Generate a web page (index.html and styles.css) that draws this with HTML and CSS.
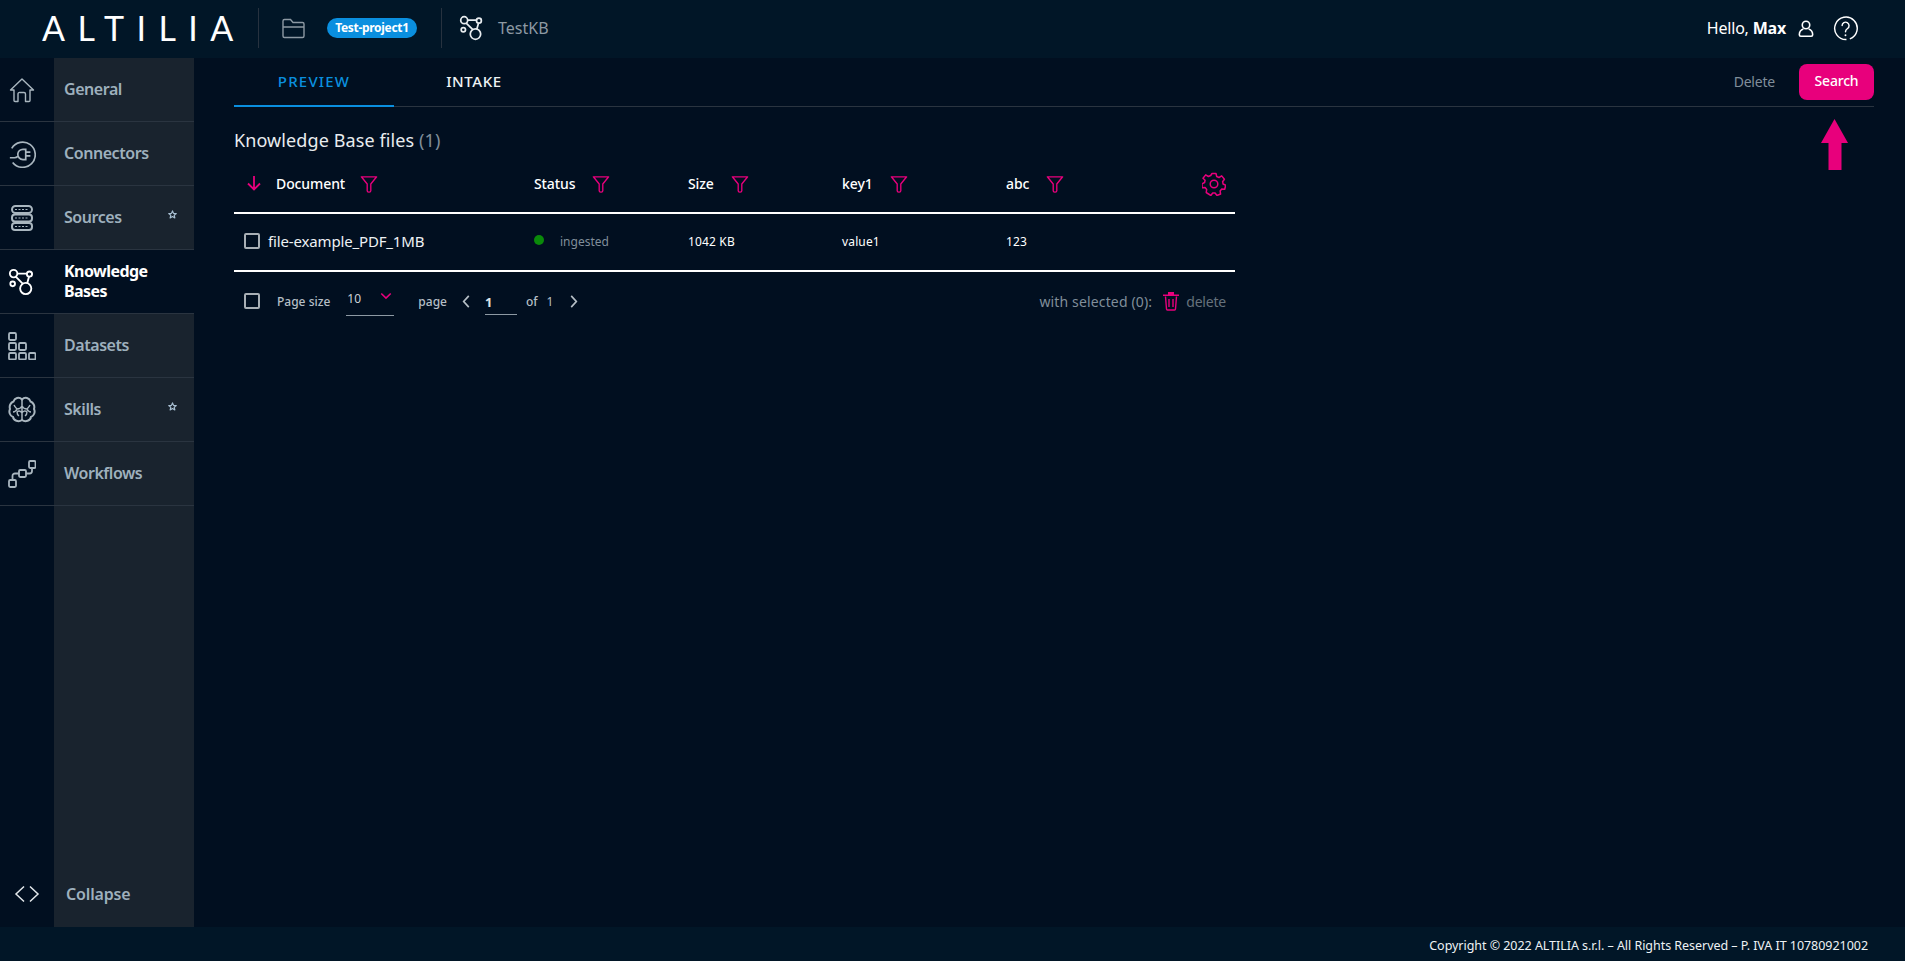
FILE: index.html
```html
<!DOCTYPE html>
<html lang="en">
<head>
<meta charset="utf-8">
<title>Altilia - TestKB</title>
<link rel="stylesheet" href="styles.css">
</head>
<body>
<svg class="defs" width="0" height="0" aria-hidden="true">
  <symbol id="kb" viewBox="0 0 30 30"><g fill="none" stroke="currentColor" stroke-width="2"><circle cx="6" cy="6" r="4"/><circle cx="23" cy="6.500" r="2.800"/><circle cx="5" cy="17" r="2.500"/><circle cx="19" cy="22" r="6"/><path d="M10 6h10M8 9l8 8M22.500 9.500l-2 7"/></g></symbol>
  <symbol id="filter" viewBox="0 0 20 20"><path d="M1.500 2h17l-6.500 8v7.500c0 1-1 1.500-1.800 1.500h-.5c-.8 0-1.700-.5-1.700-1.500V10z" fill="none" stroke="currentColor" stroke-width="1.500" stroke-linejoin="round"/></symbol>
  <symbol id="star" viewBox="0 0 12 12"><path d="M6 1.200 7.400 4.500l3.600.3-2.700 2.300.8 3.500L6 8.800l-3.100 1.800.8-3.500L1 4.800l3.600-.3z" fill="none" stroke="currentColor" stroke-width="1.600" stroke-linejoin="round"/></symbol>
</svg>
<header class="topbar">
  <div class="logo">ALTILIA</div>
  <span class="vsep"></span>
  <svg class="ic-folder" viewBox="0 0 24 22"><path d="M2 19V4a1.500 1.500 0 0 1 1.500-1.500h6l2.500 3h9.500A1.500 1.500 0 0 1 23 7v12a1.500 1.500 0 0 1-1.500 1.500h-18A1.500 1.500 0 0 1 2 19zM2 10h21" fill="none" stroke="currentColor" stroke-width="1.400"/></svg>
  <span class="pill">Test-project1</span>
  <span class="vsep second"></span>
  <svg class="ic-kb"><use href="#kb"/></svg>
  <span class="crumb">TestKB</span>
  <div class="user">
    <span>Hello, <b>Max</b></span>
    <svg class="ic-user" viewBox="0 0 18 20"><g fill="none" stroke="currentColor" stroke-width="1.800"><circle cx="9" cy="6" r="4.200"/><path d="M6 10.500C3 11.500 1.500 14 1.500 17c0 1 .7 1.700 1.700 1.700h11.600c1 0 1.700-.7 1.700-1.700 0-3-1.500-5.500-4.500-6.500"/></g></svg>
    <svg class="ic-help" viewBox="0 0 26 26"><g fill="none" stroke="currentColor" stroke-width="1.500"><path d="M14 24.500A11.700 11.700 0 1 1 17.500 23.800"/><path d="M9.500 10a3.600 3.600 0 1 1 5.600 3c-1.400 1-2.100 1.800-2.100 3.500" stroke-linecap="round"/></g><circle cx="13" cy="20" r="1" fill="currentColor"/></svg>
  </div>
</header>
<div class="body">
  <nav class="sidebar">
    <a class="nav-item">
      <span class="nav-ic"><svg class="sm" viewBox="0 0 26 26"><path d="M1.500 13 13 2l11.500 11h-3.500v10.500a1 1 0 0 1-1 1h-3.500V17a1.500 1.500 0 0 0-1.500-1.500h-4A1.500 1.500 0 0 0 9 17v7.500H6a1 1 0 0 1-1-1V13z" fill="none" stroke="currentColor" stroke-width="1.400" stroke-linejoin="round"/></svg></span>
      <span class="nav-label">General</span>
    </a>
    <a class="nav-item">
      <span class="nav-ic"><svg viewBox="0 0 30 30"><g fill="none" stroke="currentColor" stroke-width="1.800"><path d="M4 9A13.500 13.500 0 1 1 5 24"/><path d="M2 19h5c1.500 0 2.500-.5 3.500-1.500M10.500 15a5.500 5.500 0 0 1 5.500-5h3v11h-3a5.500 5.500 0 0 1-5.500-6zM19 13h5M19 17h5"/></g></svg></span>
      <span class="nav-label">Connectors</span>
    </a>
    <a class="nav-item">
      <span class="nav-ic"><svg viewBox="0 0 24 28"><g fill="none" stroke="currentColor" stroke-width="2"><rect x="2" y="2" width="20" height="7" rx="3.500"/><rect x="2" y="10.500" width="20" height="7" rx="3"/><rect x="2" y="19" width="20" height="7" rx="3"/><path d="M5 5.500h14M5 14h14M5 22.500h14" stroke-dasharray="2 1.500" stroke-width="1.200"/></g></svg></span>
      <span class="nav-label">Sources</span>
      <svg class="star"><use href="#star"/></svg>
    </a>
    <a class="nav-item active">
      <span class="nav-ic"><svg><use href="#kb"/></svg></span>
      <span class="nav-label">Knowledge Bases</span>
    </a>
    <a class="nav-item">
      <span class="nav-ic"><svg viewBox="0 0 28 28"><g fill="none" stroke="currentColor" stroke-width="1.800"><rect x="1" y="1" width="7" height="7" rx="1.200"/><rect x="1" y="11" width="7" height="7" rx="1.200"/><rect x="11" y="11" width="7" height="7" rx="1.200"/><rect x="1" y="21" width="7" height="6.500" rx="1.200"/><rect x="11" y="21" width="7" height="6.500" rx="1.200"/><rect x="21" y="21" width="6.500" height="6.500" rx="1.200"/></g></svg></span>
      <span class="nav-label">Datasets</span>
    </a>
    <a class="nav-item">
      <span class="nav-ic"><svg viewBox="0 0 28 28"><g fill="none" stroke="currentColor" stroke-width="2"><path d="M14 3.500C11 .5 6.500 2 5.500 5.500 2.500 6.500 1 10 2 13c-1.500 3 0 7 3 8 .5 3.500 5.500 5.500 9 3 3.500 2.500 8.500.5 9-3 3-1 4.500-5 3-8 1-3-.5-6.500-3.500-7.500C21.500 2 17 .5 14 3.500z"/><path d="M14 3.500v21M14 10c-1 2-3 3-5 3M6 9c1 2 2 3 3 4M9 13c-1 2-2 3-4 3M14 17c-1-2-3-2.500-5-1.500M9 15.500c0 2 .5 3.500 2 4.500M14 10c1 2 3 3 5 3M22 9c-1 2-2 3-3 4M19 13c1 2 2 3 4 3M14 17c1-2 3-2.500 5-1.500M19 15.500c0 2-.5 3.500-2 4.500" stroke-width="1.500"/></g></svg></span>
      <span class="nav-label">Skills</span>
      <svg class="star"><use href="#star"/></svg>
    </a>
    <a class="nav-item">
      <span class="nav-ic"><svg viewBox="0 0 28 28"><g fill="none" stroke="currentColor" stroke-width="1.800"><rect x="1" y="20" width="7" height="7" rx="1.200"/><rect x="11" y="10" width="7" height="7" rx="1.200"/><rect x="21" y="1" width="6.500" height="7" rx="1.200"/><path d="M4.500 20v-4a2.500 2.500 0 0 1 2.500-2.500h4M18 13.500h3.500a2.500 2.500 0 0 0 2.500-2.500V8"/></g></svg></span>
      <span class="nav-label">Workflows</span>
    </a>
    <span class="nav-fill"><span class="fill-ic"></span><span class="fill-label"></span></span>
    <a class="nav-item collapse">
      <span class="nav-ic"><svg viewBox="0 0 26 18"><path d="M10 1.500 2 9l8 7.500M16 1.500 24 9l-8 7.500" fill="none" stroke="currentColor" stroke-width="1.500"/></svg></span>
      <span class="nav-label">Collapse</span>
    </a>
  </nav>
  <main class="main">
    <div class="tabs">
      <span class="tab current">PREVIEW</span>
      <span class="tab">INTAKE</span>
      <span class="tabs-actions">
        <span class="link-delete">Delete</span>
        <span class="btn-search">Search</span>
      </span>
    </div>
    <svg class="arrow" viewBox="0 0 27 51"><path d="M13.500 0 27 24h-6.500v27h-13V24H0z" fill="currentColor"/></svg>
    <h1 class="title">Knowledge Base files <span>(1)</span></h1>
    <div class="table">
      <div class="row head">
        <div class="cell first"><svg class="sort" viewBox="0 0 16 16"><path d="M8 1v13M2 8.500 8 14.500l6-6" fill="none" stroke="currentColor" stroke-width="1.800"/></svg><span>Document</span><svg class="filter"><use href="#filter"/></svg></div>
        <div class="cell"><span>Status</span><svg class="filter"><use href="#filter"/></svg></div>
        <div class="cell"><span>Size</span><svg class="filter"><use href="#filter"/></svg></div>
        <div class="cell"><span>key1</span><svg class="filter"><use href="#filter"/></svg></div>
        <div class="cell"><span>abc</span><svg class="filter"><use href="#filter"/></svg>
          <svg class="gear" viewBox="0 0 24 24"><g fill="none" stroke="currentColor" stroke-width="1.500"><circle cx="12" cy="12" r="3.800"/><path d="M10 1.500h4l.7 3 2.300 1 2.700-1.600 2.700 3.300-1.800 2.500.5 2.300 2.600 1.300-1 3.900-3-.1-1.600 1.900.5 3-3.600 1.500-1.900-2.500h-2.400l-1.900 2.500L4.200 20.500l.5-3-1.600-1.900-3 .1-.1-3.900 2.600-1.300.5-2.300L1 6.200l2.700-3.300 2.700 1.600 2.300-1z" stroke-linejoin="round"/></g></svg>
        </div>
      </div>
      <div class="row data">
        <div class="cell first-data"><span class="check"></span><span class="name">file-example_PDF_1MB</span></div>
        <div class="cell"><span class="dot"></span><span class="status">ingested</span></div>
        <div class="cell small">1042 KB</div>
        <div class="cell small">value1</div>
        <div class="cell small">123</div>
      </div>
    </div>
    <div class="pager">
      <span class="check"></span>
      <span class="pg-label size-label">Page size</span>
      <span class="select"><span>10</span><svg viewBox="0 0 14 8"><path d="M1.500 1 7 6.500 12.500 1" fill="none" stroke="currentColor" stroke-width="1.800"/></svg></span>
      <span class="pg-label page-label">page</span>
      <svg class="chev" viewBox="0 0 8 14"><path d="M7 1 1.500 7 7 13" fill="none" stroke="currentColor" stroke-width="1.800"/></svg>
      <span class="page-input">1</span>
      <span class="pg-label of">of</span>
      <span class="pg-label total">1</span>
      <svg class="chev next" viewBox="0 0 8 14"><path d="M1 1l5.500 6L1 13" fill="none" stroke="currentColor" stroke-width="1.800"/></svg>
      <span class="bulk">
        <span>with selected (0):</span>
        <svg class="trash" viewBox="0 0 16 20"><g fill="none" stroke="currentColor" stroke-width="1.400"><path d="M2.500 5.500 3.500 18a1 1 0 0 0 1 1h7a1 1 0 0 0 1-1l1-12.500M6 8v8M10 8v8"/></g><path d="M0 3.500h16v1.500H0zM5 1h6v2.500H5z" fill="currentColor"/></svg>
        <span class="muted">delete</span>
      </span>
    </div>
  </main>
</div>
<footer class="footer">Copyright © 2022 ALTILIA s.r.l. – All Rights Reserved – P. IVA IT 10780921002</footer>
</body>
</html>
```
FILE: styles.css
```css
* { box-sizing: border-box; }
html, body { height: 100%; }
body {
  margin: 0;
  height: 961px;
  overflow: hidden;
  display: flex;
  flex-direction: column;
  background: #010f20;
  color: #fff;
  font-family: "Noto Sans", "Open Sans", sans-serif;
}
.defs { position: absolute; }

.topbar {
  height: 58px;
  flex: none;
  display: flex;
  align-items: center;
  padding-bottom: 2px;
  background: #011627;
}
.logo {
  width: 258px;
  padding-left: 42px;
  font-family: "Lato", sans-serif;
  font-weight: 400;
  font-size: 34px;
  letter-spacing: 12.4px;
  line-height: 1;
  color: #fff;
  white-space: nowrap;
}
.vsep { width: 1px; height: 40px; background: #27323f; }
.ic-folder { width: 24px; height: 22px; margin-left: 22px; color: #8d99a3; }
.pill {
  margin-left: 22px;
  width: 90px;
  height: 20px;
  border-radius: 10px;
  background: #0a8fdf;
  font-size: 12px;
  font-weight: 700;
  line-height: 19px;
  text-align: center;
  letter-spacing: -0.3px;
}
.vsep.second { margin-left: 24px; }
.ic-kb { width: 26px; height: 28px; margin-left: 17px; color: #e8ecef; }
.crumb { margin-left: 13px; font-size: 16px; color: #8d99a3; }
.user { margin-left: auto; display: flex; align-items: center; padding-right: 47px; font-size: 16px; letter-spacing: -0.2px; }
.user b { font-weight: 700; }
.ic-user { width: 16px; height: 19px; margin-left: 12px; }
.ic-help { width: 25px; height: 25px; margin-left: 19px; }

.body { flex: 1; display: flex; min-height: 0; }
.sidebar { width: 194px; flex: none; display: flex; flex-direction: column; }
.nav-item {
  height: 64px;
  flex: none;
  display: flex;
  position: relative;
  border-bottom: 1px solid #2a3440;
  background: linear-gradient(to right, #010f20 54px, #19232e 54px);
}
.nav-ic { width: 54px; flex: none; display: flex; align-items: center; justify-content: center; padding-right: 10px; color: #a9b6bf; }
.nav-ic svg { width: 28px; height: 28px; }
.nav-ic svg.sm { width: 26px; height: 26px; }
.nav-label {
  padding-left: 10px;
  padding-bottom: 1px;
  align-self: center;
  font-size: 16px;
  font-weight: 600;
  line-height: 20px;
  letter-spacing: -0.45px;
  color: #9eb0bd;
}
.nav-item.active { background: #010f20; }
.nav-item.active .nav-ic { color: #fff; }
.nav-item.active .nav-label { color: #fff; font-weight: 700; width: 110px; letter-spacing: -0.55px; }
.star { position: absolute; top: 24px; left: 168px; width: 9px; height: 9px; color: #a9c0d3; }
.nav-fill { flex: 1; display: flex; }
.fill-ic { width: 54px; }
.fill-label { flex: 1; background: #19232e; }
.nav-item.collapse { height: 66px; border-bottom: 0; }
.collapse .nav-ic { padding-right: 0; color: #e4e9ec; }
.collapse .nav-ic svg { width: 26px; height: 18px; }
.collapse .nav-label { padding-left: 12px; letter-spacing: -0.15px; }

.main { flex: 1; position: relative; padding: 0 31px 0 40px; min-width: 0; }
.tabs { height: 49px; display: flex; border-bottom: 1px solid #2a3440; }
.tab {
  width: 160px;
  height: 49px;
  display: flex;
  align-items: center;
  justify-content: center;
  padding-bottom: 4px;
  font-size: 15px;
  font-weight: 500;
  letter-spacing: 0.6px;
  color: #eef2f4;
}
.tab.current { color: #0a8fdf; border-bottom: 2px solid #0a8fdf; padding-bottom: 2px; letter-spacing: 1.2px; }
.tabs-actions { margin-left: auto; display: flex; align-items: flex-start; padding-top: 6px; }
.link-delete { margin-top: 8px; margin-right: 24px; font-size: 14px; letter-spacing: -0.2px; color: #808e9a; }
.btn-search {
  width: 75px;
  height: 36px;
  border-radius: 8px;
  background: #e8007c;
  font-size: 14px;
  font-weight: 500;
  line-height: 34px;
  text-align: center;
  letter-spacing: -0.2px;
}
.arrow { position: absolute; left: 1627px; top: 61px; width: 27px; height: 51px; color: #e8007c; }
.title { margin: 19px 0 0; height: 28px; font-size: 18px; font-weight: 400; line-height: 28px; letter-spacing: 0.1px; color: #e8ecef; }
.title span { color: #808e9a; }

.table { width: 1001px; }
.row { display: grid; grid-template-columns: 300px 154px 154px 164px 1fr; }
.row.head { height: 60px; border-bottom: 2px solid #fff; }
.row.data { height: 58px; border-bottom: 2px solid #fff; }
.cell { display: flex; align-items: center; font-size: 14px; min-width: 0; position: relative; }
.row.head .cell { padding-top: 1px; font-weight: 500; letter-spacing: -0.1px; }
.row.data .cell { padding-bottom: 2px; }
.cell.first { padding-left: 12px; }
.sort { width: 16px; height: 16px; color: #e8007c; margin-right: 14px; margin-bottom: 2px; }
.filter { width: 18px; height: 18px; margin-left: 17px; color: #e8007c; }
.cell.first .filter { margin-left: 15px; }
.gear { width: 24px; height: 24px; color: #e8007c; position: absolute; left: 196px; top: 18px; }
.check { width: 16px; height: 16px; flex: none; border: 2px solid #a8afb5; border-radius: 2px; }
.first-data { padding-left: 10px; }
.name { margin-left: 8px; font-size: 15px; letter-spacing: -0.15px; color: #eef2f4; }
.dot { width: 10px; height: 10px; border-radius: 50%; background: #0a8a0a; margin-bottom: 2px; }
.status { margin-left: 16px; font-size: 12px; color: #808e9a; }
.cell.small { font-size: 12px; letter-spacing: 0.15px; }

.pager { width: 1001px; height: 58px; display: flex; align-items: center; padding-left: 10px; font-size: 13px; }
.pg-label { font-size: 12px; font-weight: 500; color: #b6bfc6; }
.size-label { margin-left: 17px; }
.select {
  width: 48px;
  height: 30px;
  margin-left: 16px;
  padding-left: 1px;
  border-bottom: 1px solid #8d99a3;
  display: flex;
  justify-content: space-between;
  font-size: 12px;
  line-height: 26px;
  color: #cdd3d8;
}
.select svg { width: 12px; height: 8px; margin: 6px 2px 0 0; color: #e8007c; }
.page-label { margin-left: 24px; }
.chev { width: 8px; height: 13px; color: #b6bfc6; margin-left: 15px; }
.chev.next { margin-left: 17px; }
.page-input {
  width: 32px;
  height: 28px;
  margin-left: 15px;
  border-bottom: 1px solid #8d99a3;
  font-size: 13px;
  font-weight: 700;
  line-height: 30px;
  color: #dfe4e7;
}
.of { margin-left: 9px; }
.total { margin-left: 9px; font-weight: 400; }
.bulk { margin-left: auto; padding-right: 9px; display: flex; align-items: center; font-size: 14px; letter-spacing: 0.15px; color: #808e9a; }
.trash { width: 16px; height: 20px; margin-left: 11px; color: #e8007c; }
.muted { margin-left: 7px; letter-spacing: -0.2px; color: #66727c; }

.footer {
  height: 34px;
  flex: none;
  background: #011627;
  padding-right: 37px;
  text-align: right;
  font-size: 12.5px;
  line-height: 38px;
  letter-spacing: -0.04px;
  color: #eef2f4;
}
```
